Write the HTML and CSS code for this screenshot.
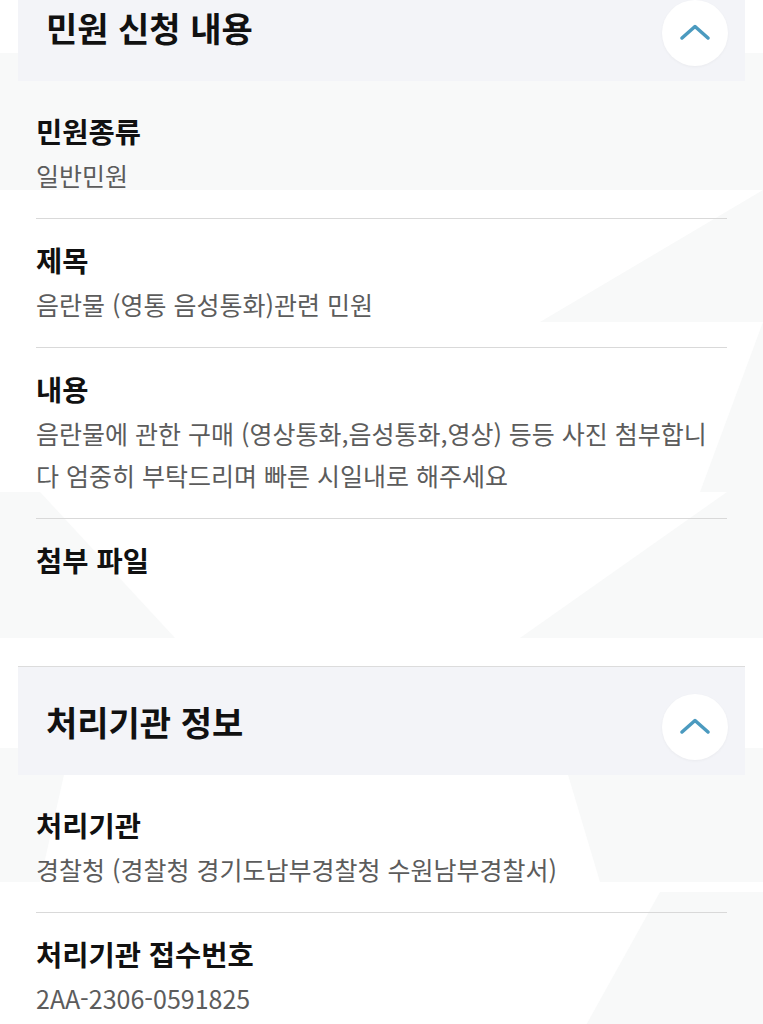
FILE: index.html
```html
<!DOCTYPE html>
<html lang="ko">

<head>
	<meta charset="utf-8">
	<title>민원 상세</title>
	<link rel="stylesheet" href="styles.css">
</head>

<body>

	<div class="page">
		<!-- 배경 무늬 -->
		<svg class="bg" width="763" height="1100" viewBox="0 0 763 1100" aria-hidden="true">
			<polygon points="0,81 763,81 763,218 0,218" />
			<polygon points="763,218 763,350 540,350" />
			<polygon points="763,350 763,520 700,520" />
			<polygon points="0,520 40,520 175,666 0,666" />
			<polygon points="727,520 763,520 763,666 520,666" />
			<polygon points="0,776 70,776 40,910 0,910" />
			<polygon points="560,776 763,776 763,910 600,910" />
			<polygon points="660,920 763,920 763,1100 560,1100" />
		</svg>

		<section class="panel first">
			<div class="panel-head">
				<h2>민원 신청 내용</h2>
				<button class="toggle" type="button">
					<svg width="30" height="16" viewBox="0 0 30 16">
						<polyline points="2,14 15,2.5 28,14" />
					</svg>
				</button>
			</div>
			<div class="fields">
				<div class="field">
					<div class="field-label">민원종류</div>
					<div class="field-value">일반민원</div>
				</div>
				<div class="field">
					<div class="field-label">제목</div>
					<div class="field-value">음란물 (영통 음성통화)관련 민원</div>
				</div>
				<div class="field">
					<div class="field-label">내용</div>
					<div class="field-value">음란물에 관한 구매 (영상통화,음성통화,영상) 등등 사진 첨부합니다 엄중히 부탁드리며 빠른 시일내로 해주세요</div>
				</div>
				<div class="field">
					<div class="field-label">첨부 파일</div>
					<div class="field-value"></div>
				</div>
			</div>
		</section>

		<section class="panel">
			<div class="panel-head">
				<h2>처리기관 정보</h2>
				<button class="toggle" type="button">
					<svg width="30" height="16" viewBox="0 0 30 16">
						<polyline points="2,14 15,2.5 28,14" />
					</svg>
				</button>
			</div>
			<div class="fields">
				<div class="field">
					<div class="field-label">처리기관</div>
					<div class="field-value">경찰청 (경찰청 경기도남부경찰청 수원남부경찰서)</div>
				</div>
				<div class="field">
					<div class="field-label">처리기관 접수번호</div>
					<div class="field-value">2AA-2306-0591825</div>
				</div>
			</div>
		</section>
	</div>

</body>

</html>
```

FILE: styles.css
```css
* {
	padding: 0px;
	margin: 0px;
	box-sizing: border-box;
}

body {
	background-color: #fff;
	font-family: "Noto Sans CJK KR", "Noto Sans", sans-serif;
	color: #111;
	overflow: hidden;
}

.page {
	position: relative;
	width: 763px;
}

.bg {
	position: absolute;
	left: 0px;
	top: 0px;
	z-index: 0;
}

.bg polygon {
	fill: #f8f9f9;
}

.panel {
	position: relative;
	z-index: 1;
	padding-bottom: 19px;
}

.panel.first {
	margin-top: -28px;
}

.panel-head {
	display: flex;
	align-items: center;
	justify-content: space-between;
	height: 109px;
	margin: 0px 18px;
	padding: 0px 17px 0px 28px;
	background-color: #f3f4f8;
	border-top: 1px solid #dcdcdc;
}

.panel-head h2 {
	font-size: 34px;
	font-weight: 700;
	color: #111;
}

.toggle {
	display: flex;
	align-items: center;
	justify-content: center;
	width: 66px;
	height: 66px;
	margin-top: 12px;
	border: none;
	border-radius: 50%;
	background-color: #fff;
	box-shadow: 0px 1px 3px rgba(0, 0, 0, 0.04);
}

.toggle svg {
	margin-top: -2px;
}

.toggle polyline {
	fill: none;
	stroke: #4b9abf;
	stroke-width: 3.5;
	stroke-linecap: round;
	stroke-linejoin: round;
}

.fields {
	padding-top: 9px;
	margin: 0px 36px 0px 36px;
}

.field {
	padding: 23px 0px 22px;
}

.field + .field {
	border-top: 1px solid #d9d9d9;
}

.field-label {
	font-size: 28.5px;
	line-height: 36px;
	font-weight: 700;
	color: #111;
}

.field-value {
	min-height: 42px;
	margin-top: 5px;
	padding-right: 12px;
	font-size: 25px;
	line-height: 42px;
	color: #5c5c5c;
}
```
